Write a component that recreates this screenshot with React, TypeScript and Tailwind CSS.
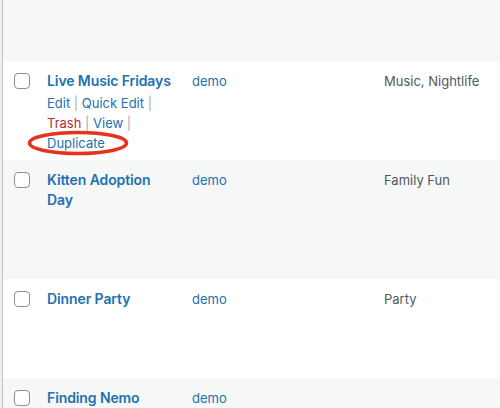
const ROWS = [
  { title: "Live Music Fridays", author: "demo", cats: "Music, Nightlife", actions: true },
  { title: "Kitten Adoption Day", author: "demo", cats: "Family Fun", actions: false },
  { title: "Dinner Party", author: "demo", cats: "Party", actions: false },
  { title: "Finding Nemo", author: "demo", cats: "", actions: false },
];

function RowActions({ visible }: { visible: boolean }) {
  const sep = <span className="text-[#a7aaad]"> | </span>;
  return (
    <div className={`mt-[2px] text-[13px] leading-[20px] ${visible ? "" : "invisible"}`}>
      <span className="text-[#2271b1]">Edit</span>
      {sep}
      <span className="text-[#2271b1]">Quick Edit</span>
      {sep}
      <span className="text-[#b32d2e]">Trash</span>
      {sep}
      <span className="text-[#2271b1]">View</span>
      {sep}
      <span className="text-[#2271b1]">Duplicate</span>
    </div>
  );
}

export default function App() {
  return (
    <div
      className="relative h-[408px] w-[500px] overflow-hidden bg-[#f0f0f1]"
      style={{ fontFamily: "Inter, 'Noto Sans', sans-serif" }}
    >
      <div className="ml-[2px] h-full border-l border-[#c3c4c7] bg-white">
        <div className="h-[61px] bg-[#f6f7f7]" />
        {ROWS.map((row, i) => (
          <div
            key={row.title}
            className={`grid grid-cols-[34px_145px_192px_1fr] pt-[10px] pb-[7px] ${
              i % 2 === 1 ? "bg-[#f6f7f7]" : "bg-white"
            }`}
          >
            <div className="pl-[11px] pt-[2px]">
              <div className="h-4 w-4 rounded-[4px] border border-[#8c8f94] bg-white" />
            </div>
            <div className="ml-[10px] w-[131px]">
              <div className="text-[14px] font-semibold leading-[20px] tracking-[-0.1px] text-[#2271b1]">{row.title}</div>
              <RowActions visible={row.actions} />
            </div>
            <div className="pl-[10px] text-[13px] leading-[20px] text-[#2271b1]">{row.author}</div>
            <div className="pl-[10px] text-[13px] leading-[20px] text-[#50575e]">{row.cats}</div>
          </div>
        ))}
      </div>
      <svg className="absolute left-0 top-0" width="500" height="408" viewBox="0 0 500 408">
        <ellipse cx="78" cy="143" rx="48.5" ry="10.5" fill="none" stroke="#e8321e" strokeWidth="3.5" />
      </svg>
    </div>
  );
}
